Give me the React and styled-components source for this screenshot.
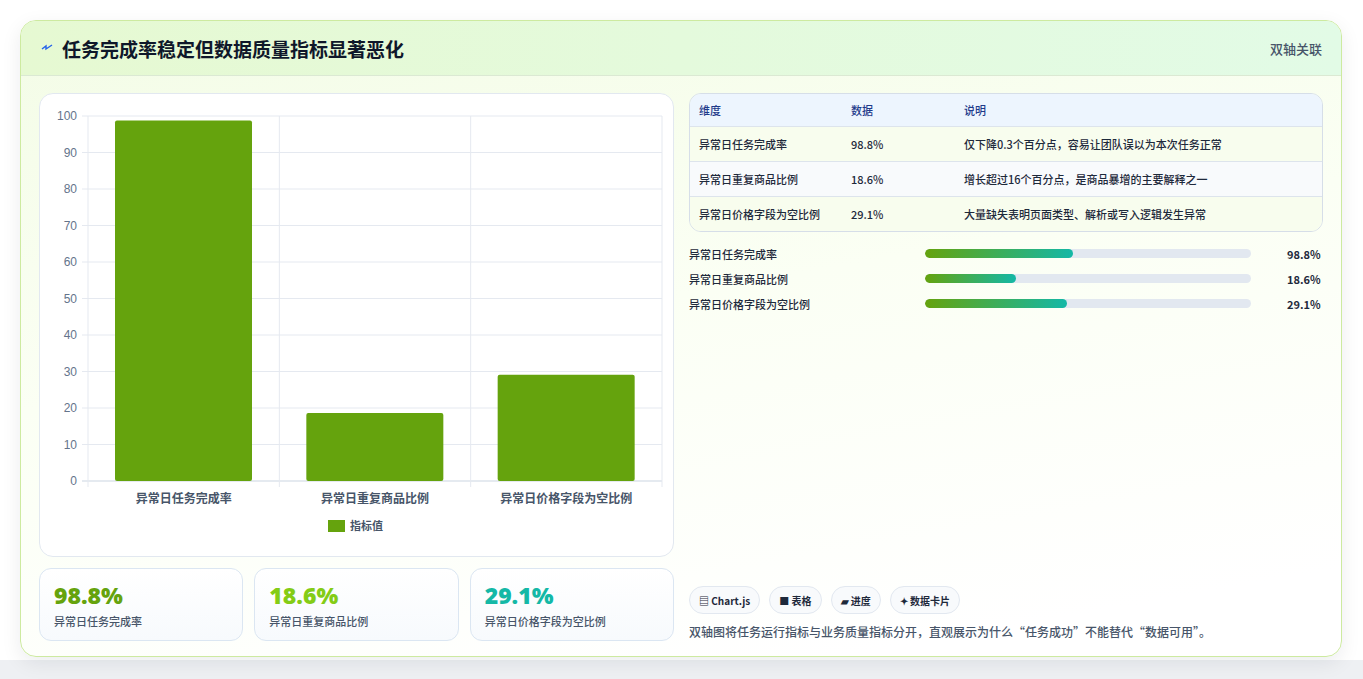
import styled, { createGlobalStyle } from "styled-components";

const GlobalStyle = createGlobalStyle`
  body {
    margin: 0;
    background: #f1f3f5;
    font-family: "Noto Sans CJK SC", "Liberation Sans", sans-serif;
  }
`;

const Page = styled.div`
  width: 1363px;
  height: 679px;
  padding: 20px 21px 21px 20px;
  box-sizing: border-box;
  background: linear-gradient(#ffffff 0, #ffffff 660px, #eef0f3 660px);
`;

const Card = styled.div`
  height: 637px;
  box-sizing: border-box;
  border: 1px solid #cdeaa0;
  border-radius: 16px;
  overflow: hidden;
  background: linear-gradient(170deg, #f3fce6 0%, #fbfff4 45%, #ffffff 90%);
  box-shadow: 0 6px 20px rgba(15, 23, 42, 0.08);
  display: flex;
  flex-direction: column;
`;

const Header = styled.header`
  height: 54px;
  flex-shrink: 0;
  display: flex;
  align-items: center;
  justify-content: space-between;
  padding: 0 19px 0 20px;
  background: linear-gradient(90deg, #e6f9d2, #e2fbe6);
  border-bottom: 1px solid #dbe9d3;
`;

const Title = styled.h1`
  margin: 0;
  font-size: 19px;
  font-weight: 700;
  color: #0f172a;
  display: flex;
  align-items: center;
  gap: 9px;
`;

const Tag = styled.span`
  font-size: 13px;
  color: #475569;
  font-weight: 500;
`;

const Body = styled.div`
  flex: 1;
  display: grid;
  grid-template-columns: 635px 634px;
  gap: 15px;
  padding: 17px 18px 17px 18px;
`;

const Col = styled.div`
  display: flex;
  flex-direction: column;
  gap: 11px;
`;

const ChartBox = styled.div`
  height: 462px;
  background: #fff;
  border: 1px solid #e2e8f0;
  border-radius: 14px;
`;

const Kpis = styled.div`
  display: grid;
  grid-template-columns: repeat(3, 1fr);
  gap: 11px;
`;

const Kpi = styled.div`
  height: 73px;
  box-sizing: border-box;
  border: 1px solid #dbe6f2;
  border-radius: 12px;
  background: linear-gradient(180deg, #ffffff, #f7fafd);
  padding: 10px 14px;
`;

const KpiValue = styled.div`
  font-family: "Open Sans", "Liberation Sans", sans-serif;
  font-size: 23px;
  font-weight: 800;
  color: ${(p) => p.color};
  line-height: 32px;
`;

const KpiLabel = styled.div`
  font-size: 11px;
  color: #475569;
  font-weight: 500;
  margin-top: 2px;
`;

const Table = styled.div`
  border: 1px solid #d6dee8;
  border-radius: 12px;
  overflow: hidden;
  font-size: 11px;
  font-weight: 500;
  color: #1e293b;
`;

const Row = styled.div`
  display: grid;
  grid-template-columns: 152px 113px 1fr;
  height: ${(p) => (p.head ? "32px" : "34px")};
  align-items: center;
  padding-left: 9px;
  background: ${(p) => (p.head ? "#edf5fe" : p.alt ? "#f8fafc" : "#f8fdee")};
  color: ${(p) => (p.head ? "#1e3a8a" : "#1e293b")};
  border-top: ${(p) => (p.head ? "none" : "1px solid #dde4ec")};
`;

const Bars = styled.div`
  display: flex;
  flex-direction: column;
  gap: 8px;
  margin-top: 2px;
`;

const BarRow = styled.div`
  display: grid;
  grid-template-columns: 236px 326px 1fr;
  align-items: center;
  gap: 0;
  height: 17px;
  font-size: 11px;
  font-weight: 500;
  color: #1e293b;
`;

const Track = styled.div`
  height: 9px;
  width: 326px;
  border-radius: 5px;
  background: #e2e8f0;
  overflow: hidden;
`;

const Fill = styled.div`
  height: 100%;
  border-radius: 5px;
  background: linear-gradient(90deg, #65a30d, #14b8a6);
`;

const Val = styled.span`
  padding-left: 36px;
  font-weight: 700;
`;

const Spacer = styled.div`
  flex: 1;
`;

const Chips = styled.div`
  display: flex;
  gap: 9px;
`;

const Chip = styled.span`
  height: 28px;
  box-sizing: border-box;
  padding: 0 9px;
  border: 1px solid #e2e8f0;
  border-radius: 14px;
  background: #f8fafc;
  display: inline-flex;
  align-items: center;
  gap: 3px;
  font-size: 10px;
  font-weight: 700;
  color: #1e293b;
`;

const Note = styled.p`
  margin: 9px 0 1px;
  font-size: 12px;
  color: #475569;
  font-weight: 500;
`;

const data = [
  { label: "异常日任务完成率", v: 98.8, note: "仅下降0.3个百分点，容易让团队误以为本次任务正常" },
  { label: "异常日重复商品比例", v: 18.6, note: "增长超过16个百分点，是商品暴增的主要解释之一" },
  { label: "异常日价格字段为空比例", v: 29.1, note: "大量缺失表明页面类型、解析或写入逻辑发生异常" },
];

function Chart() {
  const x0 = 48, x1 = 622, yTop = 22, yBot = 387;
  const cw = (x1 - x0) / 3;
  const ticks = [0, 10, 20, 30, 40, 50, 60, 70, 80, 90, 100];
  const y = (v) => yBot - ((yBot - yTop) * v) / 100;
  return (
    <svg width="634" height="460" style={{ display: "block" }} fontFamily="Liberation Sans, Noto Sans CJK SC, sans-serif">
      {ticks.map((t) => (
        <g key={t}>
          <line x1={x0 - 6} x2={x1} y1={y(t)} y2={y(t)} stroke={t === 0 ? "#cbd5e1" : "#e5e9f0"} />
          <text x={x0 - 11} y={y(t) + 4} textAnchor="end" fontSize="12" fill="#64748b">{t}</text>
        </g>
      ))}
      {[0, 1, 2, 3].map((i) => (
        <line key={i} x1={x0 + cw * i} x2={x0 + cw * i} y1={yTop} y2={yBot + 6} stroke="#e5e9f0" />
      ))}
      {data.map((d, i) => (
        <g key={d.label}>
          <rect x={x0 + cw * i + 27} y={y(d.v)} width={137} height={yBot - y(d.v)} rx="2" fill="#65a30d" />
          <text x={x0 + cw * i + cw / 2} y={yBot + 22} textAnchor="middle" fontSize="12" fontWeight="600" fill="#475569" fontFamily="Noto Sans CJK SC, sans-serif">{d.label}</text>
        </g>
      ))}
      <rect x="288" y="426" width="17" height="12" fill="#65a30d" />
      <text x="310" y="436" fontSize="11" fontWeight="600" fill="#475569" fontFamily="Noto Sans CJK SC, sans-serif">指标值</text>
    </svg>
  );
}

export default function App() {
  const kpiColors = ["#65a30d", "#84cc16", "#14b8a6"];
  return (
    <Page>
      <GlobalStyle />
      <Card>
        <Header>
          <Title>
            <svg width="12" height="10" viewBox="0 0 12 10">
              <path d="M1 6 L5 3 L5 6 L11 2" fill="none" stroke="#2563eb" strokeWidth="1.4" />
            </svg>
            任务完成率稳定但数据质量指标显著恶化
          </Title>
          <Tag>双轴关联</Tag>
        </Header>
        <Body>
          <Col>
            <ChartBox>
              <Chart />
            </ChartBox>
            <Kpis>
              {data.map((d, i) => (
                <Kpi key={d.label}>
                  <KpiValue color={kpiColors[i]}>{d.v}%</KpiValue>
                  <KpiLabel>{d.label}</KpiLabel>
                </Kpi>
              ))}
            </Kpis>
          </Col>
          <Col>
            <Table>
              <Row head>
                <span>维度</span>
                <span>数据</span>
                <span>说明</span>
              </Row>
              {data.map((d, i) => (
                <Row key={d.label} alt={i === 1}>
                  <span>{d.label}</span>
                  <span>{d.v}%</span>
                  <span>{d.note}</span>
                </Row>
              ))}
            </Table>
            <Bars>
              {data.map((d) => (
                <BarRow key={d.label}>
                  <span>{d.label}</span>
                  <Track>
                    <Fill style={{ width: `${d.v * 0.46}%`, minWidth: d.v < 50 ? `${d.v * 1.5}%` : 0 }} />
                  </Track>
                  <Val>{d.v}%</Val>
                </BarRow>
              ))}
            </Bars>
            <Spacer />
            <div>
              <Chips>
                <Chip>▤ Chart.js</Chip>
                <Chip>■ 表格</Chip>
                <Chip>▰ 进度</Chip>
                <Chip>✦ 数据卡片</Chip>
              </Chips>
              <Note>双轴图将任务运行指标与业务质量指标分开，直观展示为什么“任务成功”不能替代“数据可用”。</Note>
            </div>
          </Col>
        </Body>
      </Card>
    </Page>
  );
}
